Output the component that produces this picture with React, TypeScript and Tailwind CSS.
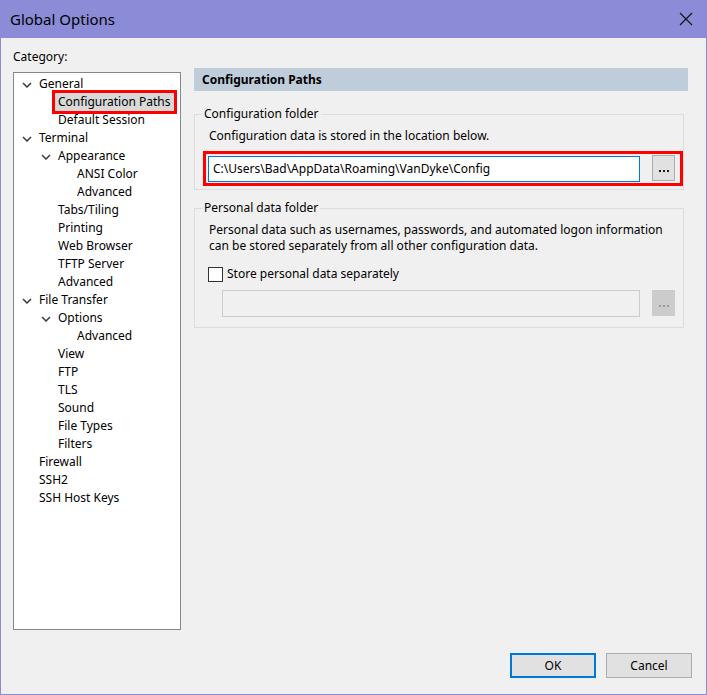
import React from "react";

type Node = { label: string; level: number; chevron?: boolean; selected?: boolean };

const tree: Node[] = [
  { label: "General", level: 0, chevron: true },
  { label: "Configuration Paths", level: 1, selected: true },
  { label: "Default Session", level: 1 },
  { label: "Terminal", level: 0, chevron: true },
  { label: "Appearance", level: 1, chevron: true },
  { label: "ANSI Color", level: 2 },
  { label: "Advanced", level: 2 },
  { label: "Tabs/Tiling", level: 1 },
  { label: "Printing", level: 1 },
  { label: "Web Browser", level: 1 },
  { label: "TFTP Server", level: 1 },
  { label: "Advanced", level: 1 },
  { label: "File Transfer", level: 0, chevron: true },
  { label: "Options", level: 1, chevron: true },
  { label: "Advanced", level: 2 },
  { label: "View", level: 1 },
  { label: "FTP", level: 1 },
  { label: "TLS", level: 1 },
  { label: "Sound", level: 1 },
  { label: "File Types", level: 1 },
  { label: "Filters", level: 1 },
  { label: "Firewall", level: 0 },
  { label: "SSH2", level: 0 },
  { label: "SSH Host Keys", level: 0 },
];

const indent = ["pl-[25px]", "pl-[44px]", "pl-[63px]"];

const Chevron = () => (
  <svg width="10" height="6" viewBox="0 0 10 6" className="absolute -left-[17px] top-[7px]">
    <polyline points="1,1 5,5 9,1" fill="none" stroke="#3c3c3c" strokeWidth="1.5" />
  </svg>
);

const TreeRow = ({ node }: { node: Node }) => (
  <div className={`h-[18px] flex items-center ${indent[node.level]}`}>
    <div className="relative">
      {node.chevron && <Chevron />}
      {node.selected ? (
        <div className="-ml-[6px] -my-[3px] w-[125px] border-[3px] border-[#ff0000]">
          <div className="bg-[#d9d9d9] pl-[3px] h-[18px] leading-[18px]">{node.label}</div>
        </div>
      ) : (
        <span className="leading-[18px]">{node.label}</span>
      )}
    </div>
  </div>
);

const BrowseButton = ({ disabled }: { disabled?: boolean }) => (
  <div
    className={`w-[23px] h-[26px] border flex items-end justify-center gap-[2px] pb-[8px] ${
      disabled ? "border-[#cccccc] bg-[#cccccc]" : "border-[#adadad] bg-[#e1e1e1]"
    }`}
  >
    {[0, 1, 2].map((i) => (
      <span key={i} className={`w-[2px] h-[2px] ${disabled ? "bg-[#9a9a9a]" : "bg-[#1a1a1a]"}`} />
    ))}
  </div>
);

export default function App() {
  return (
    <div
      className="w-[707px] h-[695px] bg-[#f0f0f0] border border-t-0 border-[#8b8bd8] flex flex-col text-[12px] text-black"
      style={{ fontFamily: '"Noto Sans", "Open Sans", sans-serif' }}
    >
      {/* title bar */}
      <div className="h-[38px] bg-[#8b8bd8] -mx-px flex items-center justify-between pl-[10px] pr-[14px]">
        <span className="text-[15px]">Global Options</span>
        <svg width="14" height="14" viewBox="0 0 14 14">
          <path d="M1 1 L13 13 M13 1 L1 13" stroke="#111" strokeWidth="1.1" />
        </svg>
      </div>

      <div className="flex flex-1">
        {/* category column */}
        <div className="ml-[12px] w-[168px] pt-[11px] flex flex-col">
          <div className="h-[16px] leading-[16px] mb-[7px]">Category:</div>
          <div className="h-[558px] bg-white border border-[#828790] pt-[2px]">
            {tree.map((n, i) => (
              <TreeRow key={i} node={n} />
            ))}
          </div>
        </div>

        {/* settings column */}
        <div className="ml-[13px] w-[494px] pt-[30px] flex flex-col">
          <div className="h-[23px] bg-[#bfcddb] pl-[8px] font-bold leading-[23px]">Configuration Paths</div>

          <fieldset className="mt-[15px] w-[490px] border border-[#dcdcdc] pb-[3px]">
            <legend className="ml-[7px] px-[2px] leading-[16px]">Configuration folder</legend>
            <div className="pl-[14px] mt-[6px] leading-[16px]">Configuration data is stored in the location below.</div>
            <div className="ml-[8px] mt-[7px] w-[480px] h-[35px] border-[3px] border-[#ff0000] flex items-start pt-[1px] pl-[2px] pr-[5px]">
              <div className="mt-px w-[432px] h-[26px] bg-white border border-[#0078d7] flex items-center pl-[4px]">
                C:\Users\Bad\AppData\Roaming\VanDyke\Config
              </div>
              <div className="ml-auto">
                <BrowseButton />
              </div>
            </div>
          </fieldset>

          <fieldset className="mt-[10px] w-[490px] border border-[#dcdcdc] pb-[10px]">
            <legend className="ml-[7px] px-[2px] leading-[16px]">Personal data folder</legend>
            <div className="pl-[14px] mt-[6px] leading-[16px]">
              Personal data such as usernames, passwords, and automated logon information
              <br />
              can be stored separately from all other configuration data.
            </div>
            <div className="pl-[13px] mt-[12px] flex items-center h-[16px]">
              <div className="w-[15px] h-[15px] border border-[#333333] bg-white" />
              <span className="ml-[4px] leading-[16px]">Store personal data separately</span>
            </div>
            <div className="pl-[27px] pr-[8px] mt-[8px] flex items-start">
              <div className="w-[418px] h-[27px] bg-[#f0f0f0] border border-[#cccccc]" />
              <div className="ml-auto">
                <BrowseButton disabled />
              </div>
            </div>
          </fieldset>
        </div>
      </div>

      {/* buttons */}
      <div className="flex justify-end gap-[10px] pr-[14px] pb-[16px]">
        <div className="w-[86px] h-[25px] border-2 border-[#0078d7] bg-[#e1e1e1] flex items-center justify-center">OK</div>
        <div className="w-[86px] h-[25px] border border-[#adadad] bg-[#e1e1e1] flex items-center justify-center">Cancel</div>
      </div>
    </div>
  );
}
